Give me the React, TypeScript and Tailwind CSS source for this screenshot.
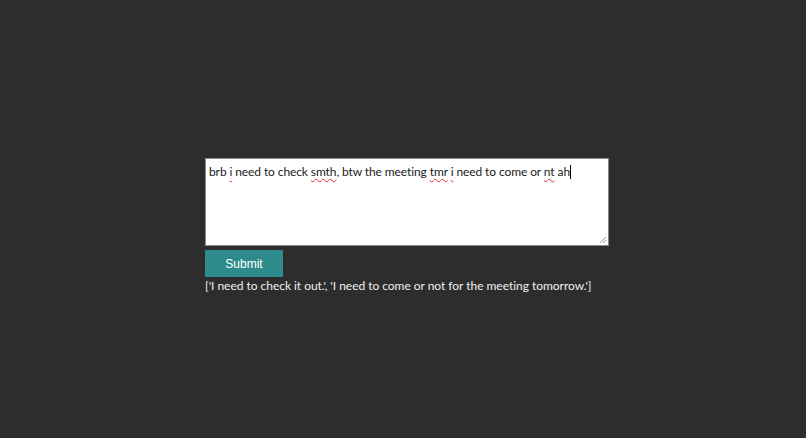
import React from 'react';

const typed: { text: string; flagged?: boolean }[] = [
    { text: 'brb ' },
    { text: 'i', flagged: true },
    { text: ' need to check ' },
    { text: 'smth', flagged: true },
    { text: ', btw the meeting ' },
    { text: 'tmr', flagged: true },
    { text: ' ' },
    { text: 'i', flagged: true },
    { text: ' need to come or ' },
    { text: 'nt', flagged: true },
    { text: ' ah' },
];

const result = ['I need to check it out.', 'I need to come or not for the meeting tomorrow.'];

const App = () => {
    return (
        <div className="min-h-[438px] w-full bg-[#2d2d2d] pt-[158px] pl-[205px]" style={{ fontFamily: 'Lato, "Open Sans", sans-serif' }}>
            <div className="flex flex-col items-start">
                {/* looks like a textarea with the browser's spellcheck squiggles */}
                <div role="textbox" className="relative w-[404px] h-[88px] bg-white border border-[#8a8a8a] px-[3px] pt-[5px] text-[12px] tracking-[-0.1px] leading-[15px] text-[#1a1a1a] whitespace-pre">
                    {typed.map((part, i) => (
                        <span key={i} className={part.flagged ? 'underline decoration-wavy decoration-[#e0303a] decoration-1 underline-offset-[2px]' : ''}>
                            {part.text}
                        </span>
                    ))}
                    <span className="inline-block w-px h-[14px] bg-black align-[-3px]"></span>
                    <svg className="absolute right-[1px] bottom-[1px]" width="8" height="8" viewBox="0 0 8 8">
                        <path d="M7 1 L1 7 M7 4 L4 7" stroke="#9a9a9a" strokeWidth="1" />
                    </svg>
                </div>
                <button type="button" className="mt-[4px] w-[78px] h-[27px] bg-[#2e8b8b] text-white text-[12px]" style={{ fontFamily: '"Liberation Sans", Arial, sans-serif' }}>
                    Submit
                </button>
                <div className="mt-[1px] text-[12px] tracking-[-0.03px] leading-[16px] text-[#f0f0f0]">
                    [{result.map((r) => `'${r}'`).join(', ')}]
                </div>
            </div>
        </div>
    );
};

export default App;
